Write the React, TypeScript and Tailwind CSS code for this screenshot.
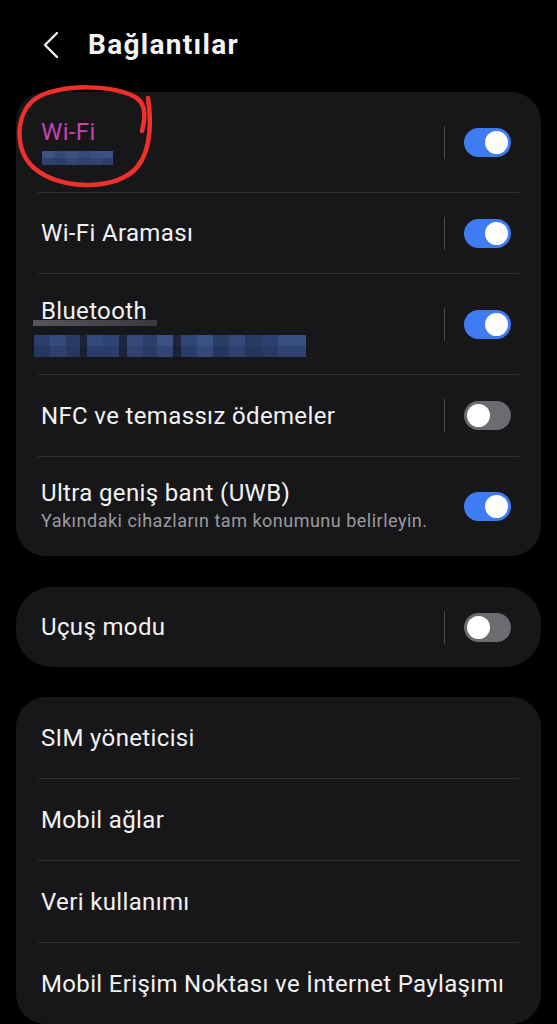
import React from 'react';

const font = { fontFamily: 'Roboto, "Noto Sans", sans-serif' };

const Toggle: React.FC<{ on: boolean }> = ({ on }) => (
  <div
    className={`w-[47px] h-[29px] rounded-full p-[3px] flex items-center ${
      on ? 'bg-[#3f7cf4] justify-end' : 'bg-[#6c6c70] justify-start'
    }`}
  >
    <div className="w-[23px] h-[23px] rounded-full bg-white" />
  </div>
);

// pixelated blur stand-in, two rows of blue cells
const Pixels: React.FC<{ top: string[]; bottom: string[]; widths: number[]; h: number }> = ({ top, bottom, widths, h }) => (
  <div className="flex flex-col">
    {[top, bottom].map((row, r) => (
      <div key={r} className="flex">
        {row.map((c, i) => (
          <div key={i} style={{ width: widths[i], height: h, background: c }} />
        ))}
      </div>
    ))}
  </div>
);

const Divider = () => <div className="h-px mx-[22px] bg-[#2e2e32]" />;

const SwitchRow: React.FC<{ height: string; on: boolean; children: React.ReactNode }> = ({ height, on, children }) => (
  <div className={`flex items-center pl-[25px] pr-[30px] ${height}`}>
    <div className="flex-1 min-w-0">{children}</div>
    <div className="w-px h-[33px] bg-[#4a4a4e] mr-[19px]" />
    <Toggle on={on} />
  </div>
);

const Title: React.FC<{ children: React.ReactNode; pink?: boolean }> = ({ children, pink }) => (
  <div className={`text-[24px] leading-[28px] tracking-[0.35px] ${pink ? 'text-[#c544ad]' : 'text-[#f2f2f2]'}`}>
    {children}
  </div>
);

const App: React.FC = () => {
  const wifiTop = ['#3d5386', '#34497a', '#3a5080', '#354a7b', '#394f82', '#3b5184'];
  const wifiBottom = ['#2f416c', '#2c3e68', '#33466f', '#2e416b', '#32456f', '#2d3f69'];
  const wifiW = [12, 12, 12, 12, 12, 11];
  const btTop = [
    '#2c3f6c', '#344b7e', '#2a3c66', '#1c2238', '#324a7c', '#2e4474', '#1f2640', '#35497a', '#2b3f6b',
    '#3a5182', '#1e243c', '#2f4575', '#3a5387', '#2a3d68', '#35497c', '#2a3b63', '#2d4170', '#36507f',
  ];
  const btBottom = [
    '#26375f', '#2d4170', '#27385f', '#1a2034', '#2a3d6a', '#2a3c69', '#1c2239', '#2f4270', '#283a63',
    '#314577', '#1b2137', '#2a3d68', '#33497a', '#25375e', '#2e4170', '#26365c', '#283a64', '#2e4372',
  ];
  const btW = [16, 16, 14, 7, 16, 16, 8, 16, 14, 16, 8, 16, 16, 16, 16, 17, 16, 28];

  return (
    <div className="w-[557px] h-[1024px] bg-black overflow-hidden relative" style={font}>
      {/* Header */}
      <div className="h-[92px] flex items-center pl-[42px]">
        <svg width="18" height="28" viewBox="0 0 18 28" className="mt-[-2px]">
          <path d="M15 2 L3 14 L15 26" fill="none" stroke="#f2f2f2" strokeWidth="2.4" strokeLinecap="round" strokeLinejoin="round" />
        </svg>
        <h1 className="ml-[28px] text-[28px] font-bold tracking-[1.3px] text-[#f4f4f4] leading-none mt-[-2px]">Bağlantılar</h1>
      </div>

      <div className="px-[16px] flex flex-col gap-[31px]">
        {/* Card 1 */}
        <div className="bg-[#17171a] rounded-[30px]">
          <SwitchRow height="h-[100px]" on>
            <div className="mt-[-2px]">
              <Title pink>Wi-Fi</Title>
              <div className="mt-[5px] ml-[1px]">
                <Pixels top={wifiTop} bottom={wifiBottom} widths={wifiW} h={7} />
              </div>
            </div>
          </SwitchRow>
          <Divider />
          <SwitchRow height="h-[80px]" on>
            <Title>Wi-Fi Araması</Title>
          </SwitchRow>
          <Divider />
          <SwitchRow height="h-[100px]" on>
            <div className="pt-[5px]">
              <Title>Bluetooth</Title>
              <div className="ml-[-8px] mt-[-5px] w-[124px] h-[6px] bg-gradient-to-r from-[#55555a] to-[#3a3a3e]" />
              <div className="ml-[-7px] mt-[9px]">
                <Pixels top={btTop} bottom={btBottom} widths={btW} h={11} />
              </div>
            </div>
          </SwitchRow>
          <Divider />
          <SwitchRow height="h-[81px]" on={false}>
            <Title>NFC ve temassız ödemeler</Title>
          </SwitchRow>
          <Divider />
          <div className="h-[99px] flex items-center pl-[25px] pr-[30px]">
            <div className="flex-1 min-w-0 pb-[2px]">
              <Title>Ultra geniş bant (UWB)</Title>
              <div className="text-[18px] leading-[22px] tracking-[0.5px] mt-[3px] text-[#9b9b9f]">
                Yakındaki cihazların tam konumunu belirleyin.
              </div>
            </div>
            <Toggle on />
          </div>
        </div>

        {/* Card 2 */}
        <div className="bg-[#17171a] rounded-[36px]">
          <SwitchRow height="h-[80px]" on={false}>
            <Title>Uçuş modu</Title>
          </SwitchRow>
        </div>

        {/* Card 3 */}
        <div className="bg-[#17171a] rounded-[30px] mt-[-1px]">
          {['SIM yöneticisi', 'Mobil ağlar', 'Veri kullanımı', 'Mobil Erişim Noktası ve İnternet Paylaşımı'].map((t, i) => (
            <React.Fragment key={t}>
              {i > 0 && <Divider />}
              <div className="h-[81px] flex items-center pl-[25px]">
                <Title>{t}</Title>
              </div>
            </React.Fragment>
          ))}
        </div>
      </div>

      {/* red marker annotation over Wi-Fi */}
      <svg className="absolute left-0 top-0 pointer-events-none" width="200" height="200" viewBox="0 0 200 200">
        <path
          d="M148 98 C151 118 152 148 138 166 C120 190 62 192 34 168 C14 150 15 114 35 99 C58 83 118 84 138 99 C146 106 145 120 142 131"
          fill="none"
          stroke="#f2302b"
          strokeWidth="4.5"
          strokeLinecap="round"
          strokeLinejoin="round"
        />
      </svg>
    </div>
  );
};

export default App;
